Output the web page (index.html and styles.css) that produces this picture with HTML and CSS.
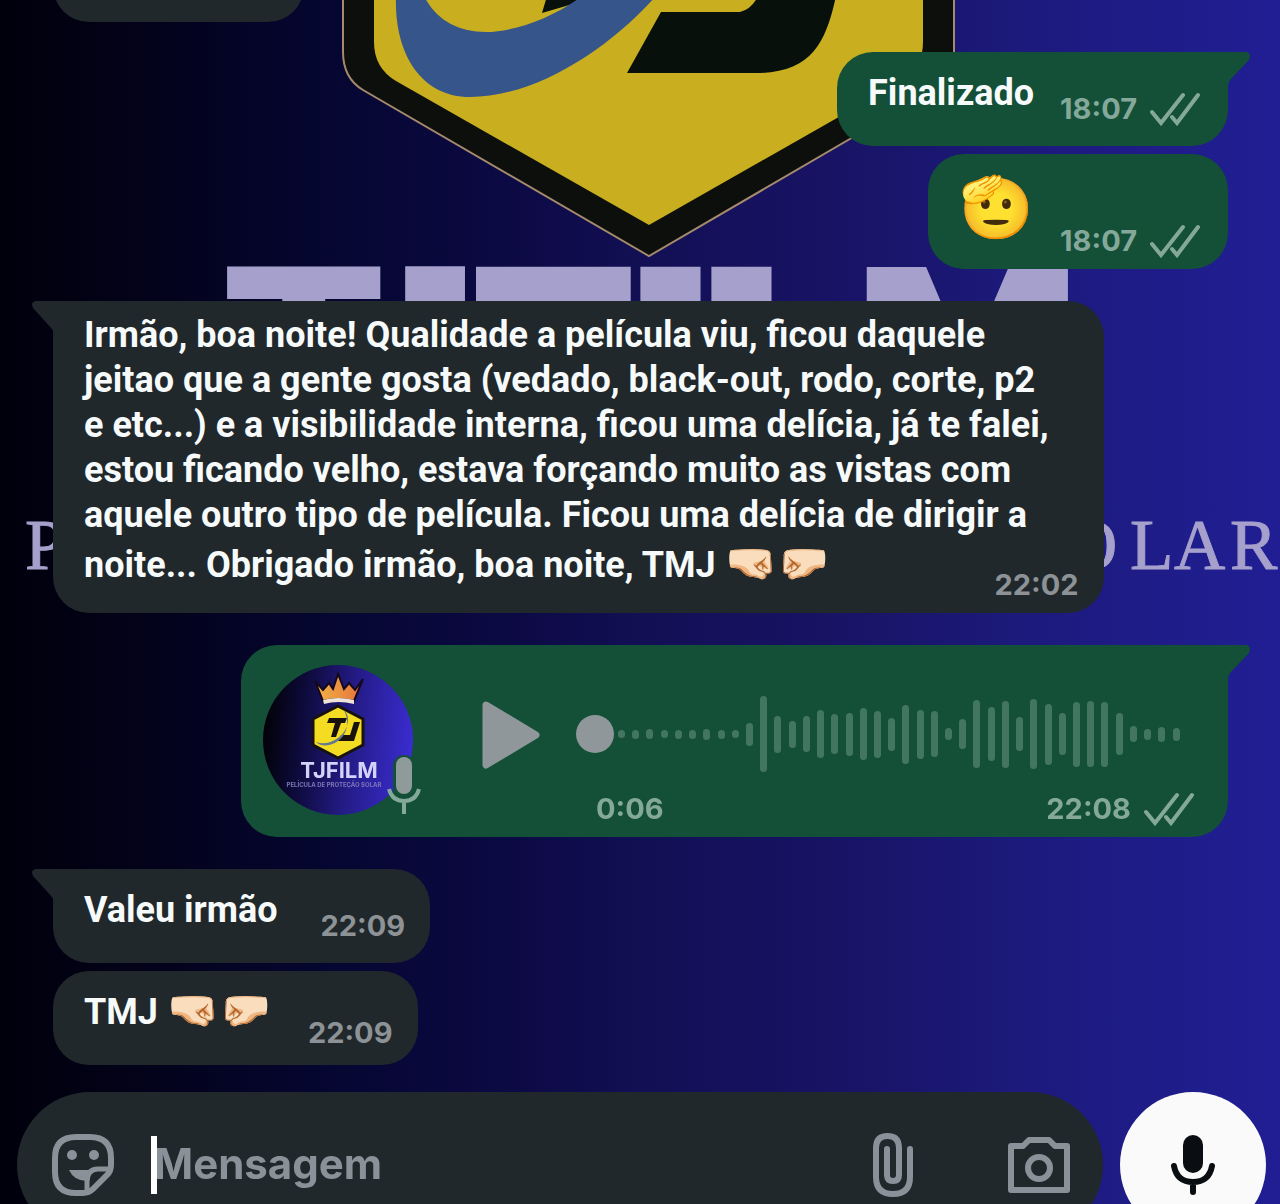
FILE: index.html
```
<!DOCTYPE html>
<html lang="pt-BR">
<head>
<meta charset="utf-8">
<meta name="viewport" content="width=device-width, initial-scale=1">
<title>Conversa</title>
<link rel="stylesheet" href="styles.css">
</head>
<body>
<svg class="symbols" aria-hidden="true">
  <symbol id="ticks" viewBox="0 0 50 34">
    <path d="M2 20l9 11L33 3M22 25l5 6L48 3" fill="none" stroke="currentColor" stroke-width="4" stroke-linecap="round"/>
  </symbol>
  <symbol id="tail-out" viewBox="0 0 40 36">
    <path d="M0 0H36Q42 1 39 8L20 28Q18 31 18 36H0Z" fill="currentColor"/>
  </symbol>
  <symbol id="tail-in" viewBox="0 0 40 36">
    <path d="M40 0H4Q-2 1 1 7L20 28Q22 31 22 36H40Z" fill="currentColor"/>
  </symbol>
</svg>

<svg class="wallpaper" viewBox="0 0 1280 1204" preserveAspectRatio="xMidYMid slice" aria-hidden="true">
  <defs>
    <linearGradient id="night" x1="0" x2="1" y1="0" y2="0">
      <stop offset="0" stop-color="#00000c"/>
      <stop offset=".1" stop-color="#030218"/>
      <stop offset=".25" stop-color="#050630"/>
      <stop offset=".4" stop-color="#0c0a44"/>
      <stop offset=".5" stop-color="#120f54"/>
      <stop offset=".65" stop-color="#181364"/>
      <stop offset=".8" stop-color="#1c1a7c"/>
      <stop offset="1" stop-color="#211e94"/>
    </linearGradient>
  </defs>
  <rect width="1280" height="1204" fill="url(#night)"/>
  <path d="M343-4V52Q343 78 363 90L649 256L934 90Q954 78 954 52V-4Z" fill="#0c0f0c" stroke="#a58a6c" stroke-width="2"/>
  <path d="M374-4V42Q374 68 396 81L649 225L902 81Q923 68 923 42V-4Z" fill="#c9af20"/>
  <path d="M547-4L542 13L600-4ZM627 73L661 12H740Q752 9 758-4H836C826 42 812 73 756 73Z" fill="#07100b"/>
  <path d="M396-4C394 52 420 97 470 97C535 97 608 50 656-4H582C556 16 516 32 486 32C458 32 436 20 424-4Z" fill="#36558a"/>
  <g class="brand">
    <text x="226" y="433" font-size="228">T</text>
    <text x="376" y="498" font-size="318">J</text>
    <text x="448" y="489" font-size="305">F</text>
    <text x="611" y="500" font-size="320">I</text>
    <text x="682" y="500" font-size="320">L</text>
    <text x="844" y="448" font-size="248">M</text>
  </g>
  <g class="motto">
    <text x="25" y="569">P</text>
    <text x="1066 1130 1174 1230" y="569">OLAR</text>
  </g>
</svg>

<main class="chat">
  <section class="messages">
    <div class="bubble in earlier"></div>

    <article class="bubble out line">
      <svg class="tail"><use href="#tail-out"/></svg>
      <p class="text">Finalizado</p>
      <footer class="meta"><time>18:07</time><svg class="ticks"><use href="#ticks"/></svg></footer>
    </article>

    <article class="bubble out emoji">
      <p class="salute">🫡</p>
      <footer class="meta"><time>18:07</time><svg class="ticks"><use href="#ticks"/></svg></footer>
    </article>

    <article class="bubble in long group">
      <svg class="tail"><use href="#tail-in"/></svg>
      <p class="text">Irmão, boa noite! Qualidade a película viu, ficou daquele<br>jeitao que a gente gosta (vedado, black-out, rodo, corte, p2<br>e etc...) e a visibilidade interna, ficou uma delícia, já te falei,<br>estou ficando velho, estava forçando muito as vistas com<br>aquele outro tipo de película. Ficou uma delícia de dirigir a<br>noite... Obrigado irmão, boa noite, TMJ <span class="fists">🤜🏻🤛🏻</span></p>
      <footer class="meta"><time>22:02</time></footer>
    </article>

    <article class="bubble out voice group">
      <svg class="tail"><use href="#tail-out"/></svg>
      <div class="avatar">
        <svg viewBox="0 0 150 150" width="150" height="150" role="img" aria-label="TJFILM">
          <defs>
            <linearGradient id="disc" x1="0" x2="1" y1=".4" y2=".5">
              <stop offset=".02" stop-color="#03020a"/>
              <stop offset=".25" stop-color="#0d0a3a"/>
              <stop offset=".6" stop-color="#241c88"/>
              <stop offset="1" stop-color="#3a2cd0"/>
            </linearGradient>
            <linearGradient id="gold" x1="0" x2="1" y1="0" y2="0">
              <stop offset="0" stop-color="#f2b545"/>
              <stop offset="1" stop-color="#e5703c"/>
            </linearGradient>
          </defs>
          <circle cx="75" cy="75" r="75" fill="url(#disc)"/>
          <g stroke="#15081c" stroke-width="2">
            <path d="M52 16L60 25L66 18L70 24L75 9L81 24L86 18L92 25L100 14L91 36Q75 32 60 36Z" fill="url(#gold)"/>
            <path d="M60 35Q75 31 91 35V39Q75 35 61 39Z" fill="#f0e4d8" stroke="none"/>
          </g>
          <path d="M75 41L100 54V80L75 93L50 80V54Z" fill="#f4dc22" stroke="#17120f" stroke-width="3" stroke-linejoin="round"/>
          <path d="M66 53H84L82 58H78L73 72H68L72 58H64ZM91 57H97L91 76H75L78 70H87Z" fill="#17130c"/>
          <path d="M81 45C94 58 74 84 53 77C64 88 94 72 81 45Z" fill="#65798a"/>
          <text class="disc-name" x="76" y="113" text-anchor="middle">TJFILM</text>
          <text class="disc-motto" x="71" y="122" text-anchor="middle">PELÍCULA DE PROTEÇÃO SOLAR</text>
        </svg>
        <svg class="voice-mic" viewBox="0 0 34 60" aria-hidden="true">
          <rect x="6" y="0" width="22" height="42" rx="11" fill="#144f37"/>
          <rect x="9" y="2" width="16" height="37" rx="8" fill="#8f9a9a"/>
          <path d="M2 34Q5 46 17 46T32 34M17 46V59" fill="none" stroke="#84a99b" stroke-width="4"/>
        </svg>
      </div>
      <button class="play" type="button" aria-label="Reproduzir">
        <svg viewBox="0 0 58 68" width="58" height="68"><path d="M4 4L54 34L4 64Z" fill="#8f979b" stroke="#8f979b" stroke-width="7" stroke-linejoin="round"/></svg>
      </button>
      <div class="track">
        <div class="wave" id="wave">
          <input class="seek" type="range" min="0" max="6" value="0" aria-label="Posição do áudio">
        </div>
        <footer class="meta spread"><span>0:06</span><span class="sent"><time>22:08</time><svg class="ticks"><use href="#ticks"/></svg></span></footer>
      </div>
    </article>

    <article class="bubble in line group">
      <svg class="tail"><use href="#tail-in"/></svg>
      <p class="text">Valeu irmão</p>
      <footer class="meta"><time>22:09</time></footer>
    </article>

    <article class="bubble in line last">
      <p class="text">TMJ <span class="fists">🤜🏻🤛🏻</span></p>
      <footer class="meta"><time>22:09</time></footer>
    </article>
  </section>

  <form class="composer">
    <div class="field">
      <button type="button" class="icon" aria-label="Figurinhas">
        <svg viewBox="0 0 62 62" width="62" height="62" fill="none" stroke="currentColor" stroke-width="6">
          <path d="M24 3H38Q59 3 59 24V31Q59 37 55 41L41 55Q37 59 31 59H24Q3 59 3 38V24Q3 3 24 3Z"/>
          <path d="M35 59V48Q35 35 46 35H59" stroke-width="5"/>
          <path d="M17 36H37L35 47Q22 47 17 36Z" fill="currentColor" stroke="none"/>
          <circle cx="20" cy="21" r="5" fill="currentColor" stroke="none"/>
          <circle cx="42" cy="21" r="5" fill="currentColor" stroke="none"/>
        </svg>
      </button>
      <label class="entry">
        <span class="caret"></span>
        <input type="text" placeholder="Mensagem" aria-label="Mensagem">
      </label>
      <button type="button" class="icon clip" aria-label="Anexar">
        <svg viewBox="0 0 40 64" width="40" height="64" fill="none" stroke="currentColor" stroke-width="6" stroke-linecap="round">
          <path d="M37 16V44Q37 61 20 61T3 44V15Q3 3 14.500 3T26 15V42Q26 48 20 48T14 42V16"/>
        </svg>
      </button>
      <button type="button" class="icon" aria-label="Câmera">
        <svg viewBox="0 0 64 60" width="64" height="60" fill="none" stroke="currentColor" stroke-width="6" stroke-linejoin="round">
          <path d="M4 11H16L22 5H42L48 11H60V55H4Z"/>
          <circle cx="32" cy="33" r="11"/>
        </svg>
      </button>
    </div>
    <button type="button" class="record" aria-label="Gravar áudio">
      <svg viewBox="0 0 44 60" width="44" height="60">
        <rect x="12" y="0" width="20" height="38" rx="10" fill="#0a0e12"/>
        <path d="M3 31Q6 47 22 47T41 31M22 47V57" fill="none" stroke="#0a0e12" stroke-width="6" stroke-linecap="round"/>
      </svg>
    </button>
  </form>
</main>
<script src="wave.js"></script>
</body>
</html>
```
FILE: styles.css
```
* { box-sizing: border-box; }

html, body {
  margin: 0;
  height: 100%;
  overflow: hidden;
}

body {
  font-family: Inter, Roboto, sans-serif;
  font-weight: 700;
  background: #0c0a44;
  color: #f7fafa;
}

p { margin: 0; }

button {
  padding: 0;
  border: 0;
  background: none;
  color: inherit;
}

button svg { display: block; }

.symbols {
  position: absolute;
  width: 0;
  height: 0;
}

.wallpaper {
  position: fixed;
  inset: 0;
  width: 100%;
  height: 100%;
}

.brand {
  font-family: "DejaVu Sans", sans-serif;
  font-weight: 700;
  fill: #a5a0cc;
}

.motto {
  font-family: "Liberation Serif", serif;
  font-weight: 400;
  font-size: 71px;
  fill: #a5a0cc;
  stroke: #a5a0cc;
  stroke-width: 1px;
}

.chat { position: relative; }

.messages {
  display: flex;
  flex-direction: column;
  gap: 8px;
  padding: 0 52px 0 53px;
}

.bubble {
  position: relative;
  border-radius: 36px;
  max-width: 90%;
}

.in {
  align-self: flex-start;
  background: #20282b;
  color: #f7fafa;
}

.out {
  align-self: flex-end;
  background: #144f37;
}

.group { margin-top: 24px; }

.in:has(.tail) { border-top-left-radius: 0; }
.out:has(.tail) { border-top-right-radius: 0; }

.tail {
  position: absolute;
  top: 0;
  width: 40px;
  height: 36px;
}

.in .tail { left: -21px; color: #20282b; }
.out .tail { right: -22px; color: #144f37; }

.earlier {
  width: 251px;
  height: 94px;
  margin: -72px 0 22px;
}

.text {
  font-family: Roboto, Inter, sans-serif;
  font-size: 36px;
  line-height: 45px;
  white-space: nowrap;
}

.fists {
  font-size: 42px;
  line-height: 50px;
}

.meta {
  display: flex;
  align-items: center;
  gap: 13px;
  font-size: 29px;
  line-height: 34px;
  font-weight: 700;
}

.in .meta { color: #8d9296; }
.out .meta { color: #84a99b; }

.ticks {
  width: 50px;
  height: 34px;
}

.line {
  display: flex;
  align-items: flex-end;
  justify-content: space-between;
  gap: 26px;
  min-height: 94px;
  padding: 19px 28px 20px 31px;
}

.line .text { align-self: flex-start; }
.line.in { gap: 43px; padding-right: 25px; }
.line.last { gap: 37px; padding-top: 14px; padding-bottom: 15px; }

.emoji {
  display: flex;
  align-items: flex-end;
  gap: 26px;
  height: 115px;
  padding: 12px 28px 11px 31px;
}

.salute {
  align-self: flex-start;
  font-size: 60px;
  line-height: 80px;
}

.long { padding: 12px 25px 11px 31px; }
.long .text { margin-right: 30px; }

.long .meta {
  justify-content: flex-end;
  margin-top: -20px;
}

.voice {
  display: flex;
  align-items: flex-start;
  width: 84%;
  padding: 20px 34px 11px 22px;
}

.avatar {
  position: relative;
  width: 150px;
  height: 150px;
}

.voice-mic {
  position: absolute;
  right: -8px;
  bottom: 0;
  width: 34px;
  height: 60px;
}

.disc-name {
  font-size: 22px;
  fill: #d5d2fa;
}

.disc-motto {
  font-size: 6px;
  fill: #7d76b8;
}

.play { margin: 36px 36px 0 69px; }

.track {
  flex: 1;
  padding-top: 31px;
}

.wave {
  position: relative;
  display: flex;
  align-items: center;
  justify-content: space-between;
  height: 76px;
  margin-right: 14px;
  padding-left: 42px;
}

.bar {
  width: 7px;
  border-radius: 4px;
  background: #437660;
}

.seek {
  position: absolute;
  inset: 0;
  width: 100%;
  margin: 0;
  appearance: none;
  background: none;
}

.seek::-webkit-slider-thumb {
  appearance: none;
  width: 38px;
  height: 38px;
  border-radius: 50%;
  background: #8f979b;
}

.spread {
  justify-content: space-between;
  margin-top: 20px;
  padding-left: 20px;
}

.sent {
  display: flex;
  gap: 13px;
}

.composer {
  display: flex;
  gap: 17px;
  margin-top: 27px;
  padding: 0 14px 0 17px;
}

.field {
  flex: 1;
  display: flex;
  align-items: center;
  height: 146px;
  padding: 0 32px 0 35px;
  border-radius: 73px;
  background: #20282b;
}

.icon { color: #8a9299; }
.clip { margin-right: 94px; }

.entry {
  position: relative;
  flex: 1;
  display: flex;
  align-items: center;
  margin-left: 37px;
}

.entry input {
  width: 100%;
  padding: 0 0 2px 3px;
  border: 0;
  outline: 0;
  background: none;
  font: inherit;
  font-size: 42px;
  line-height: 58px;
  color: #f7fafa;
}

.entry input::placeholder { color: #8a9299; }

.caret {
  position: absolute;
  left: 0;
  width: 6px;
  height: 58px;
  background: #fff;
}

.record {
  display: grid;
  place-items: center;
  width: 146px;
  height: 146px;
  border-radius: 50%;
  background: #fafafa;
}
```
FILE: wave.js
```
// Loudness of each slice of the recording, in pixels of bar height.
const levels = [8, 9, 10, 8, 9, 9, 11, 9, 8, 23, 76, 37, 27, 36, 48, 40, 43, 52, 47,
  33, 59, 49, 46, 12, 30, 68, 54, 67, 34, 70, 61, 42, 65, 66, 65, 42, 16, 11, 15, 13];
const wave = document.getElementById('wave');
for (const level of levels) {
  const bar = document.createElement('span');
  bar.className = 'bar';
  bar.style.height = level + 'px';
  wave.append(bar);
}
```
